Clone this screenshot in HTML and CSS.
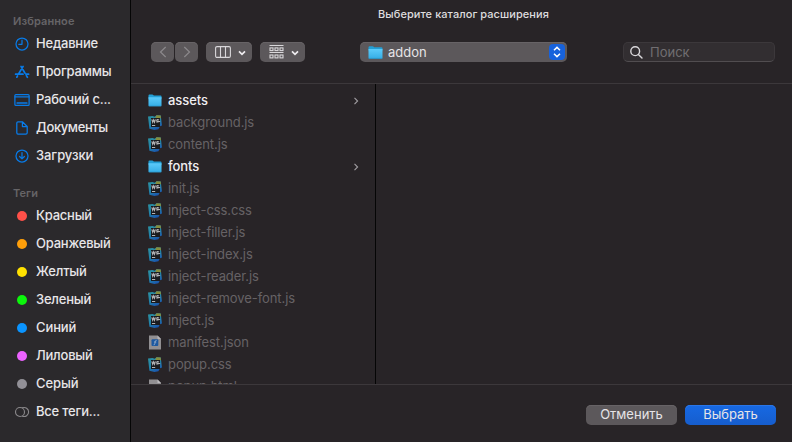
FILE: index.html
```html
<!DOCTYPE html>
<html lang="ru">
<head>
<meta charset="utf-8">
<title>Выберите каталог расширения</title>
<link rel="stylesheet" href="styles.css">
</head>
<body>
<svg class="defs" aria-hidden="true">
  <defs>
    <linearGradient id="folder-front" x1="0" y1="0" x2="0" y2="1"><stop offset="0" stop-color="#5ccbfa"/><stop offset="1" stop-color="#35aee6"/></linearGradient>
    <linearGradient id="ws-back" x1="0" y1="0" x2=".5" y2="1"><stop offset="0" stop-color="#2c93a2"/><stop offset=".6" stop-color="#2283a8"/><stop offset="1" stop-color="#1b58ae"/></linearGradient>
  </defs>
  <symbol id="folder" viewBox="0 0 15 14">
    <path d="M.5 1.8Q.5.7 1.6.7H4.7Q5.2.7 5.7 1.2L6.2 1.7H13.4Q14.5 1.7 14.5 2.8V5H.5Z" fill="#239fd5"/>
    <path d="M.5 3.5H14.5V12.2Q14.5 13.2 13.5 13.2H1.5Q.5 13.2.5 12.2Z" fill="url(#folder-front)"/>
    <path d="M.7 12.9H14.3" stroke="#2492c5" stroke-width=".6"/>
  </symbol>
  <symbol id="ws" viewBox="0 0 14 15">
    <path d="M0 1.6 4.6 1 6.6 1.8 8.6.2 12.8.6 13.2 4.2 14 10.4 12 11.2 10.4 14.2 6.4 15 1.4 13.8Z" fill="url(#ws-back)"/>
    <path d="M8.4.3 12.6.5 13 3.2H7.2Z" fill="#878d3c"/>
    <rect x="3" y="3" width="9" height="9" fill="#1a1b1f"/>
    <path d="M3.8 4.4 4.7 7.3 5.6 4.9 6.5 7.3 7.4 4.4M11.1 4.9Q8.7 4.1 8.7 5.4T11 6.5 8.4 7.1M4 10.5H7.2" fill="none" stroke="#b4b4b7" stroke-width="1.1"/>
  </symbol>
  <symbol id="doc-file" viewBox="0 0 14 15">
    <path d="M1 .5H9.5L13 4V14.5H1Z" fill="#918f92"/>
    <path d="M9.5.5V4H13Z" fill="#b6b4b7"/>
    <rect x="3.5" y="4.3" width="6.8" height="6.8" rx="1" fill="#1c58a0"/>
    <path d="M8.6 5.4Q7.4 5.2 7.2 6.7L6.8 9Q6.6 10 5.6 9.8M6 7H8.3" fill="none" stroke="#9fb5cf" stroke-width=".8"/>
  </symbol>
  <symbol id="blank-file" viewBox="0 0 14 15">
    <path d="M1 .5H9.5L13 4V14.5H1Z" fill="#918f92"/>
    <path d="M9.5.5V4H13Z" fill="#bcbabd"/>
  </symbol>
  <symbol id="chev" viewBox="0 0 6 8"><path d="M1.5.8 4.6 4 1.5 7.2" fill="none" stroke="#a09da1" stroke-width="1.1"/></symbol>
</svg>
<div class="dialog">
  <aside class="sidebar">
    <h2 class="heading">Избранное</h2>
    <ul class="links">
      <li><svg class="ico" viewBox="0 0 16 16"><circle cx="8" cy="8" r="6"/><path d="M8 4.2V8.3H4.8"/></svg><span>Недавние</span></li>
      <li><svg class="ico" viewBox="0 0 16 16"><path class="thick" d="M7 2.4 10.9 9M12.4 11.6 13.4 13.3M9.1 2.4 4.7 9.8M3.5 12 2.8 13.2M1.6 10.2H9M12 10.2H14.6"/></svg><span>Программы</span></li>
      <li><svg class="ico" viewBox="0 0 16 16"><rect x=".9" y="2.6" width="14.2" height="10.8" rx="1"/><path d="M1 4.9H15"/><path class="thick" d="M3.2 11H12.8"/></svg><span>Рабочий с...</span></li>
      <li><svg class="ico" viewBox="0 0 16 16"><path d="M4 1.8H8.4L13.2 6.5V12.8Q13.2 14.2 11.8 14.2H4Q2.8 14.2 2.8 12.8V3.1Q2.8 1.8 4 1.8ZM8.4 2V6.5H13"/></svg><span class="tight">Документы</span></li>
      <li><svg class="ico" viewBox="0 0 16 16"><circle cx="8" cy="8" r="6"/><path d="M8 4.5V10.8M5.6 8.5 8 10.9 10.4 8.5"/></svg><span class="loose">Загрузки</span></li>
    </ul>
    <h2 class="heading tags-heading">Теги</h2>
    <ul class="links">
      <li><i class="dot red"></i><span>Красный</span></li>
      <li><i class="dot orange"></i><span>Оранжевый</span></li>
      <li><i class="dot yellow"></i><span>Желтый</span></li>
      <li><i class="dot green"></i><span>Зеленый</span></li>
      <li><i class="dot blue"></i><span class="loose">Синий</span></li>
      <li><i class="dot purple"></i><span>Лиловый</span></li>
      <li><i class="dot gray"></i><span class="loose">Серый</span></li>
      <li><svg class="ico muted" viewBox="0 0 16 16"><circle cx="6" cy="8" r="4.5"/><path d="M8.5 3.8A4.5 4.5 0 1 1 8.5 12.2"/></svg><span>Все теги...</span></li>
    </ul>
  </aside>
  <main class="main">
    <header class="top">
      <h1 class="title">Выберите каталог расширения</h1>
      <div class="toolbar">
        <div class="nav">
          <button class="btn nav-btn" aria-label="Назад"><svg width="8" height="12" viewBox="0 0 8 12"><path d="M6.7 1 1.5 6 6.7 11"/></svg></button>
          <button class="btn nav-btn" aria-label="Вперёд"><svg width="8" height="12" viewBox="0 0 8 12"><path d="M1.3 1 6.5 6 1.3 11"/></svg></button>
        </div>
        <button class="btn view" aria-label="Колонки"><svg width="16" height="12" viewBox="0 0 16 12"><rect x=".6" y=".6" width="14.8" height="10.8" rx="1.4"/><path d="M5.5.6V11.4M10.5.6V11.4"/></svg><svg class="down" width="8" height="6" viewBox="0 0 8 6"><path d="M1 1.3 4 4.3 7 1.3"/></svg></button>
        <button class="btn group" aria-label="Группировка"><svg width="15" height="14" viewBox="0 0 15 14"><path d="M.5.5H14.5M.5 7.5H14.5"/><rect x="1" y="2.9" width="3" height="2.7"/><rect x="6" y="2.9" width="3" height="2.7"/><rect x="11" y="2.9" width="3" height="2.7"/><rect x="1" y="10" width="3" height="2.9"/><rect x="6" y="10" width="3" height="2.9"/><rect x="11" y="10" width="3" height="2.9"/></svg><svg class="down" width="8" height="6" viewBox="0 0 8 6"><path d="M1 1.3 4 4.3 7 1.3"/></svg></button>
        <div class="btn path"><svg class="path-ico"><use href="#folder"/></svg><span>addon</span><span class="stepper"><svg width="10" height="12" viewBox="0 0 10 12"><path d="M2 4.2 5 1.4 8 4.2M2 7.8 5 10.6 8 7.8"/></svg></span></div>
        <div class="search"><svg width="13" height="13" viewBox="0 0 13 13"><circle cx="5.2" cy="5.2" r="4.4"/><path d="M8.4 8.4 12 12"/></svg><span>Поиск</span></div>
      </div>
    </header>
    <section class="browser">
      <ul class="files">
        <li class="dir"><svg class="file-ico"><use href="#folder"/></svg><span>assets</span><svg class="chev"><use href="#chev"/></svg></li>
        <li><svg class="file-ico"><use href="#ws"/></svg><span>background.js</span></li>
        <li><svg class="file-ico"><use href="#ws"/></svg><span>content.js</span></li>
        <li class="dir"><svg class="file-ico"><use href="#folder"/></svg><span>fonts</span><svg class="chev"><use href="#chev"/></svg></li>
        <li><svg class="file-ico"><use href="#ws"/></svg><span>init.js</span></li>
        <li><svg class="file-ico"><use href="#ws"/></svg><span>inject-css.css</span></li>
        <li><svg class="file-ico"><use href="#ws"/></svg><span>inject-filler.js</span></li>
        <li><svg class="file-ico"><use href="#ws"/></svg><span>inject-index.js</span></li>
        <li><svg class="file-ico"><use href="#ws"/></svg><span>inject-reader.js</span></li>
        <li><svg class="file-ico"><use href="#ws"/></svg><span>inject-remove-font.js</span></li>
        <li><svg class="file-ico"><use href="#ws"/></svg><span>inject.js</span></li>
        <li><svg class="file-ico"><use href="#doc-file"/></svg><span>manifest.json</span></li>
        <li><svg class="file-ico"><use href="#ws"/></svg><span>popup.css</span></li>
        <li><svg class="file-ico"><use href="#blank-file"/></svg><span>popup.html</span></li>
      </ul>
      <div class="preview"></div>
    </section>
    <footer class="actions">
      <button class="btn action">Отменить</button>
      <button class="btn action primary">Выбрать</button>
    </footer>
  </main>
</div>
</body>
</html>
```
FILE: styles.css
```css
* { box-sizing: border-box; }
body { margin: 0; background: #282427; color: #e5e3e6; font: 13px/16px Inter, "Liberation Sans", sans-serif; overflow: hidden; }
ul { list-style: none; margin: 0; padding: 0; }
h1, h2 { margin: 0; }
svg { display: block; flex: none; fill: none; }
.defs { position: absolute; width: 0; height: 0; }
.dialog { display: flex; width: 792px; height: 442px; }

.sidebar { width: 131px; flex: none; padding: 13px 0 0 13px; background: #2b292c; border-right: 1px solid #050505; white-space: nowrap; }
.heading { height: 17px; font-size: 11px; line-height: 17px; font-weight: 600; color: #666467; letter-spacing: .1px; }
.tags-heading { margin-top: 15px; }
.links li { display: flex; align-items: center; height: 28px; color: #e7e5e8; font-weight: 500; }
.links span { letter-spacing: -.22px; padding-bottom: 2px; }
.links .tight { letter-spacing: -.4px; }
.links .loose { letter-spacing: -.1px; }
.ico { width: 16px; height: 16px; margin: 0 6px 0 1px; stroke: #087be8; stroke-width: 1.25; stroke-linecap: round; stroke-linejoin: round; }
.ico .thick { stroke-width: 1.7; }
.ico.muted { stroke: #8a888b; stroke-width: 1.1; }
.dot { width: 10px; height: 10px; margin: 0 9px 0 4px; border-radius: 50%; }
.red { background: #ff5049; }
.orange { background: #ff9f0a; }
.yellow { background: #ffe100; }
.green { background: #0cf60c; }
.blue { background: #0a94ff; }
.purple { background: #ec62ff; }
.gray { background: #929097; }

.main { display: flex; flex-direction: column; flex: 1; min-width: 0; }
.top { height: 84px; flex: none; border-bottom: 1px solid #3c383b; }
.title { padding: 7px 0 0 4px; height: 42px; line-height: 15px; font-size: 11px; font-weight: 500; letter-spacing: .06px; text-align: center; color: #dedcdf; }
.toolbar { display: flex; height: 20px; padding-left: 20px; }
.btn { display: flex; align-items: center; height: 20px; padding: 0; border: 0; border-radius: 5px; background: #5c585b; color: #e6e4e7; font: inherit; box-shadow: inset 0 1px #676366; }
.nav { display: flex; gap: 1px; }
.nav-btn { width: 23px; justify-content: center; }
.nav-btn svg { stroke: #8c898c; stroke-width: 1.2; }
.view { width: 46px; margin-left: 8px; padding-left: 9px; gap: 7px; }
.group { width: 45px; margin-left: 8px; padding-left: 9px; gap: 7px; }
.view svg, .group svg { stroke: #d9d7da; stroke-width: 1.1; }
.view .down, .group .down { margin-top: 1px; stroke: #eeecef; stroke-width: 1.7; }
.path { width: 207px; margin-left: 55px; padding: 0 1px 0 8px; gap: 5px; }
.path-ico { width: 15px; height: 15px; }
.stepper { display: flex; align-items: center; justify-content: center; width: 16px; height: 16px; margin: 0 1px 0 auto; border-radius: 4px; background: #1762dc; }
.stepper svg { stroke: #fff; stroke-width: 1.5; }
.search { display: flex; align-items: center; gap: 7px; width: 152px; height: 20px; margin-left: 56px; padding-left: 6px; border: 1px solid #3c383b; border-bottom-color: #514d50; border-radius: 5px; background: #322e31; color: #716e71; }
.search svg { stroke: #dad8db; stroke-width: 1.4; stroke-linecap: round; }

.browser { display: flex; height: 300px; flex: none; overflow: hidden; }
.files { width: 245px; flex: none; padding-top: 6px; border-right: 1px solid #050505; }
.files li { display: flex; align-items: center; height: 22px; padding: 0 16px 0 17px; gap: 6px; color: #666265; }
.files span { letter-spacing: -.08px; padding-bottom: 2px; }
.files .dir { color: #f0eef1; font-weight: 500; }
.file-ico { width: 14px; height: 15px; margin-bottom: 1px; }
.chev { width: 6px; height: 8px; margin: 0 0 1px auto; }
.preview { flex: 1; }

.actions { display: flex; flex: 1; justify-content: flex-end; padding: 20px 16px 0 0; gap: 8px; border-top: 1px solid #3c383b; }
.action { width: 91px; justify-content: center; padding-bottom: 2px; }
.primary { background: linear-gradient(#1769e3, #165dcd); box-shadow: inset 0 1px #2a76e8; }
```
